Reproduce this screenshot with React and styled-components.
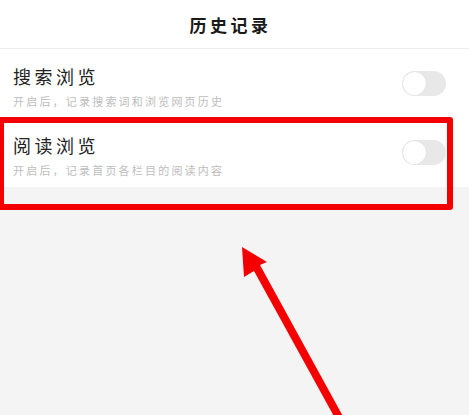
import React from "react";
import styled, { createGlobalStyle } from "styled-components";

const Global = createGlobalStyle`
  html, body { margin: 0; padding: 0; background: #f4f4f4; }
  body { font-family: "Noto Sans CJK SC", "Noto Sans", sans-serif; }
  #root { min-height: 415px; }
`;

const Page = styled.div`
  position: relative;
  width: 469px;
  height: 415px;
  overflow: hidden;
  background: #f4f4f4;
`;

const Header = styled.header`
  height: 48px;
  display: flex;
  align-items: center;
  justify-content: center;
  padding-right: 8px;
  background: #fff;
  border-bottom: 1px solid #ededed;
`;

const Title = styled.h1`
  margin: 0;
  font-size: 17px;
  font-weight: 600;
  letter-spacing: 3.5px;
  color: #1a1a1a;
`;

const List = styled.div`
  background: #fff;
`;

const Row = styled.div`
  height: 69px;
  box-sizing: border-box;
  display: flex;
  align-items: center;
  justify-content: space-between;
  padding: 0 23px 0 13px;
`;

const Texts = styled.div`
  display: flex;
  flex-direction: column;
  gap: 6px;
  margin-top: 7px;
`;

const Name = styled.div`
  font-size: 18px;
  line-height: 22px;
  letter-spacing: 3.5px;
  color: #222;
`;

const Desc = styled.div`
  font-size: 11px;
  line-height: 16px;
  letter-spacing: 2.2px;
  color: #bdbdbd;
`;

const Switch = styled.div`
  width: 44px;
  height: 25px;
  border-radius: 13px;
  background: #e8e8e8;
  box-sizing: border-box;
  padding: 1px;
  display: flex;
  align-items: center;
`;

const Knob = styled.div`
  width: 23px;
  height: 23px;
  border-radius: 50%;
  background: #fff;
  box-shadow: 0 0 1px rgba(0, 0, 0, 0.15);
`;

const Highlight = styled.div`
  position: absolute;
  left: -2px;
  top: 117px;
  width: 455px;
  height: 93px;
  box-sizing: border-box;
  border: 6px solid #f50000;
  border-radius: 3px;
  pointer-events: none;
`;

const ArrowSvg = styled.svg`
  position: absolute;
  left: 0;
  top: 0;
  pointer-events: none;
`;

const items = [
  { name: "搜索浏览", desc: "开启后，记录搜索词和浏览网页历史" },
  { name: "阅读浏览", desc: "开启后，记录首页各栏目的阅读内容" },
];

export default function App() {
  return (
    <Page>
      <Global />
      <Header>
        <Title>历史记录</Title>
      </Header>
      <List>
        {items.map((it) => (
          <Row key={it.name}>
            <Texts>
              <Name>{it.name}</Name>
              <Desc>{it.desc}</Desc>
            </Texts>
            <Switch>
              <Knob />
            </Switch>
          </Row>
        ))}
      </List>
      <Highlight />
      <ArrowSvg width="469" height="415" viewBox="0 0 469 415">
        <polygon
          points="242,247 267,262 260,265 345,420 336,420 254,271 244,277"
          fill="#f50000"
        />
      </ArrowSvg>
    </Page>
  );
}
